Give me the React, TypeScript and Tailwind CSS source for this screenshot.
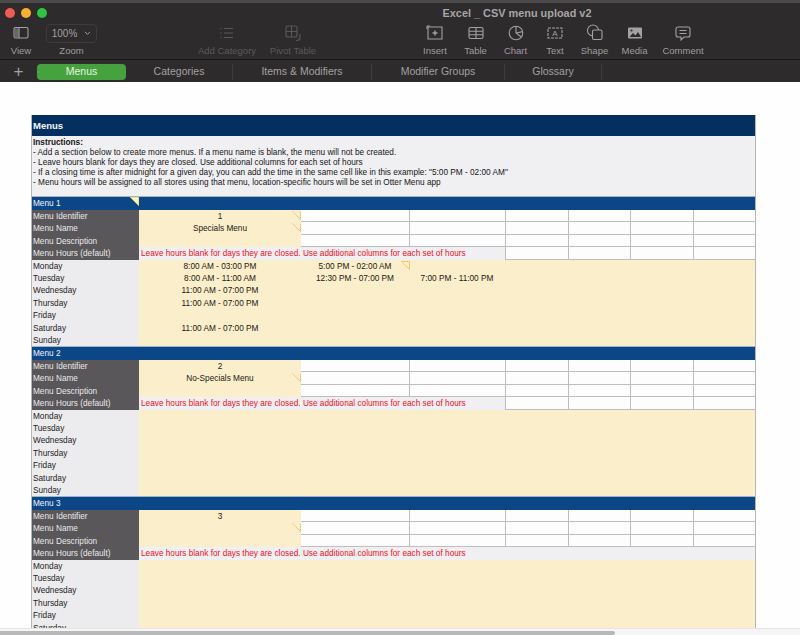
import React from 'react';

const font = { fontFamily: '"Liberation Sans", Arial, sans-serif' };

const days = ['Monday', 'Tuesday', 'Wednesday', 'Thursday', 'Friday', 'Saturday', 'Sunday'];
const redNote = 'Leave hours blank for days they are closed. Use additional columns for each set of hours';

const iconCls = 'w-[20px] h-[20px]';

const ToolIcon = ({ name, dim }: { name: string; dim?: boolean }) => {
  const c = dim ? '#5a5859' : '#a3a1a2';
  const p = { fill: 'none', stroke: c, strokeWidth: 1.1 };
  switch (name) {
    case 'view':
      return (
        <svg viewBox="0 0 20 20" className={iconCls}>
          <rect x="3" y="4.5" width="14" height="10.5" rx="1.5" {...p} />
          <rect x="4" y="5.5" width="3.5" height="8.5" fill={c} opacity="0.5" />
          <path d="M8 5v10" {...p} />
        </svg>
      );
    case 'list':
      return (
        <svg viewBox="0 0 20 20" className={iconCls}>
          <path d="M7 5.5h9M7 10h9M7 14.5h9" {...p} />
          <path d="M3.5 5.5h1M3.5 10h1M3.5 14.5h1" {...p} strokeWidth={1.6} />
        </svg>
      );
    case 'pivot':
      return (
        <svg viewBox="0 0 20 20" className={iconCls}>
          <rect x="3" y="3" width="11" height="11" rx="2" {...p} />
          <path d="M3 8.5h11M8.5 3v11" {...p} />
          <path d="M17 11v3.5a3 3 0 0 1-3 3h-1" {...p} />
        </svg>
      );
    case 'insert':
      return (
        <svg viewBox="0 0 20 20" className={iconCls}>
          <path d="M3 4h14v12H3z" {...p} />
          <path d="M10 7.5v5M7.5 10h5" {...p} strokeWidth={1.4} />
          <path d="M2 3h3M2 3v3" {...p} />
        </svg>
      );
    case 'table':
      return (
        <svg viewBox="0 0 20 20" className={iconCls}>
          <rect x="3" y="4.5" width="14" height="11" rx="1.5" {...p} />
          <path d="M3 8.2h14M3 11.8h14M10 4.5v11" {...p} />
        </svg>
      );
    case 'chart':
      return (
        <svg viewBox="0 0 20 20" className={iconCls}>
          <circle cx="10" cy="10" r="6.8" {...p} />
          <path d="M10 3.2V10l5 3.8M10 10l6.6-1.4" {...p} />
        </svg>
      );
    case 'text':
      return (
        <svg viewBox="0 0 20 20" className={iconCls}>
          <path d="M3 5h14v10H3z" {...p} strokeDasharray="3 1" />
          <text x="10" y="13" textAnchor="middle" fontSize="8" fill={c} style={font}>A</text>
        </svg>
      );
    case 'shape':
      return (
        <svg viewBox="0 0 20 20" className={iconCls}>
          <circle cx="8" cy="7.5" r="5.5" {...p} />
          <rect x="7.5" y="7" width="9.5" height="9.5" rx="1.5" fill="#2d2b2c" stroke={c} strokeWidth={1.1} />
        </svg>
      );
    case 'media':
      return (
        <svg viewBox="0 0 20 20" className={iconCls}>
          <rect x="3" y="4.5" width="14" height="11" rx="1" fill={c} />
          <path d="M4.5 14l3.5-4 2.5 2.5 2.5-3.5 3 5z" fill="#2d2b2c" />
          <circle cx="6.5" cy="7.5" r="1.1" fill="#2d2b2c" />
        </svg>
      );
    default:
      return (
        <svg viewBox="0 0 20 20" className={iconCls}>
          <path d="M5 4h10a2 2 0 0 1 2 2v6a2 2 0 0 1-2 2h-4l-3 3v-3H5a2 2 0 0 1-2-2V6a2 2 0 0 1 2-2z" {...p} />
          <path d="M6.5 7.5h7M6.5 10.5h7" {...p} />
        </svg>
      );
  }
};

const Tool = ({ name, label, w, dim }: { name: string; label: string; w: string; dim?: boolean }) => (
  <div className={`${w} flex flex-col items-center shrink-0`}>
    <div className="h-[20px] flex items-center justify-center">
      <ToolIcon name={name} dim={dim} />
    </div>
    <span className={`mt-[2px] text-[9.5px] leading-[12px] whitespace-nowrap ${dim ? 'text-[#5c5a5b]' : 'text-[#a09e9f]'}`}>
      {label}
    </span>
  </div>
);

const Tab = ({ label, w, divider }: { label: string; w: string; divider?: boolean }) => (
  <div className={`${w} h-[16px] flex items-center justify-center text-[10.5px] text-[#a3a1a2] shrink-0 ${divider ? 'border-r border-[#3f3d3e]' : ''}`}>
    {label}
  </div>
);

// little corner marker excel leaves on commented cells
const Note = () => (
  <svg viewBox="0 0 9 9" className="absolute top-[1px] right-0 w-[9px] h-[9px]">
    <path d="M0.5 0.5L8.5 8.5V0.5" fill="none" stroke="#e0b44a" strokeWidth="1" strokeDasharray="1 0.6" />
  </svg>
);

// 11 rows share 136px in the sheet, so some are 13px and some 12px
const Row = ({ tall, children }: { tall?: boolean; children: React.ReactNode }) => (
  <div className={`grid grid-cols-[107px_162px_108px_96px_63px_62px_63px_62px] text-[8.25px] leading-[13px] ${tall ? 'grid-rows-[13px] h-[13px]' : 'grid-rows-[12px] h-[12px]'}`}>
    {children}
  </div>
);

const Blanks = ({ from = 0 }: { from?: number }) => (
  <>
    {[0, 1, 2, 3, 4, 5].slice(from).map((i) => (
      <div key={i} className={`bg-[#fdfdfe] border-b border-[#bdbcbe] ${i > 0 ? 'border-l' : ''}`} />
    ))}
  </>
);

const dayTall = [false, false, true, false, true, false, false];

interface MenuProps {
  title: string;
  id: string;
  name: string;
  idNote?: boolean;
  headNote?: boolean;
  nameNote?: boolean;
  fullGrey?: boolean;
  hours?: Record<string, string[]>;
}

const Menu = ({ title, id, name, idNote, headNote, nameNote, fullGrey, hours = {} }: MenuProps) => (
  <div>
    <div className="relative h-[14px] bg-[#0b4787] border-t border-[#9fb3c9] text-[#f2f4f7] text-[8.25px] leading-[13px] pl-[1px]">
      {title}
      {headNote && (
        <svg viewBox="0 0 9 9" className="absolute top-0 left-[98px] w-[9px] h-[9px]">
          <path d="M0 0H9V9z" fill="#fbf3c8" stroke="#d9c53c" strokeWidth="0.8" />
        </svg>
      )}
    </div>
    <Row>
      <div className="bg-[#595759] text-[#e9e9ea] pl-[1px]">Menu Identifier</div>
      <div className="relative bg-[#fbeeca] text-center text-[#1c1a12]">
        {id}
        {idNote && <Note />}
      </div>
      <Blanks />
    </Row>
    <Row tall>
      <div className="bg-[#595759] text-[#e9e9ea] pl-[1px]">Menu Name</div>
      <div className="relative bg-[#fbeeca] text-center text-[#1c1a12]">
        {name}
        {nameNote && <Note />}
      </div>
      <Blanks />
    </Row>
    <Row>
      <div className="bg-[#595759] text-[#e9e9ea] pl-[1px]">Menu Description</div>
      <div className="bg-[#fbeeca]" />
      <Blanks />
    </Row>
    <Row tall>
      <div className="bg-[#595759] text-[#e9e9ea] pl-[1px]">Menu Hours (default)</div>
      <div className={`${fullGrey ? 'col-span-7' : 'col-span-3'} bg-[#f0eff1] text-[#f0101c] pl-[2px] whitespace-nowrap`}>
        {redNote}
      </div>
      {!fullGrey && <Blanks from={2} />}
    </Row>
    {days.map((d, i) => {
      const h = hours[d] || [];
      return (
        <Row key={d} tall={dayTall[i]}>
          <div className="bg-[#ecebed] text-[#1e1e1e] pl-[1px]">{d}</div>
          <div className="bg-[#fbeeca] text-center text-[#1c1a12]">{h[0]}</div>
          <div className="relative bg-[#fbeeca] text-center text-[#1c1a12]">
            {h[1]}
            {d === 'Monday' && h[1] && (
              <svg viewBox="0 0 9 9" className="absolute top-[1px] right-[-1px] w-[9px] h-[9px]">
                <path d="M0.5 0.5L8.5 8.5V0.5z" fill="none" stroke="#eeb32f" strokeWidth="1" strokeDasharray="1 0.6" />
              </svg>
            )}
          </div>
          <div className="bg-[#fbeeca] text-center text-[#1c1a12] whitespace-nowrap">{h[2]}</div>
          <div className="col-span-4 bg-[#fbeeca]" />
        </Row>
      );
    })}
  </div>
);

const App = () => {
  return (
    <div className="w-[800px] h-[635px] overflow-hidden flex flex-col bg-[#fefefe]" style={font}>
      {/* toolbar */}
      <div className="h-[82px] shrink-0 bg-[#2d2b2c]">
        <div className="h-[60px] border-t-[3px] border-b border-t-[#4b4a4b] border-b-[#171617]">
          <div className="h-[20px] flex items-center">
            <div className="flex gap-[6px] pl-[5px]">
              <span className="w-[10px] h-[10px] rounded-full bg-[#f25a54]" />
              <span className="w-[10px] h-[10px] rounded-full bg-[#f9b12e]" />
              <span className="w-[10px] h-[10px] rounded-full bg-[#2ec63f]" />
            </div>
            <div className="ml-[395px] w-[150px] text-center font-bold text-[10.9px] text-[#a7a5a6] whitespace-nowrap">
              Excel _ CSV menu upload v2
            </div>
          </div>
          <div className="flex">
            <Tool name="view" label="View" w="w-[32px] ml-[5px]" />
            <div className="ml-[9px] w-[51px] shrink-0 flex flex-col items-center">
              <div className="w-[51px] h-[19px] mt-[1px] rounded-[4px] border border-[#3d3b3c] flex items-center justify-center gap-[7px] text-[10px] text-[#a3a1a2]">
                100%
                <svg viewBox="0 0 8 6" className="w-[7px] h-[5px]">
                  <path d="M1 1l3 3 3-3" fill="none" stroke="#a3a1a2" strokeWidth="1.2" />
                </svg>
              </div>
              <span className="mt-[2px] text-[9.5px] leading-[12px] text-[#a09e9f]">Zoom</span>
            </div>
            <Tool name="list" label="Add Category" w="ml-[100px] w-[60px]" dim />
            <Tool name="pivot" label="Pivot Table" w="ml-[12px] w-[48px]" dim />
            <Tool name="insert" label="Insert" w="ml-[98px] w-[40px]" />
            <Tool name="table" label="Table" w="w-[41px]" />
            <Tool name="chart" label="Chart" w="w-[39px]" />
            <Tool name="text" label="Text" w="w-[40px]" />
            <Tool name="shape" label="Shape" w="w-[39px]" />
            <Tool name="media" label="Media" w="w-[41px]" />
            <Tool name="comment" label="Comment" w="w-[56px]" />
          </div>
        </div>
        <div className="h-[22px] flex items-center pt-[1px]">
          <div className="w-[37px] text-center text-[17px] leading-[16px] font-light text-[#a3a1a2] shrink-0">+</div>
          <div className="w-[89px] h-[16px] rounded-[4px] bg-[#46a23c] flex items-center justify-center text-[10.5px] text-[#e6f2e3] shrink-0">
            Menus
          </div>
          <Tab label="Categories" w="w-[107px]" divider />
          <Tab label="Items & Modifiers" w="w-[139px]" divider />
          <Tab label="Modifier Groups" w="w-[133px]" divider />
          <Tab label="Glossary" w="w-[97px]" divider />
        </div>
      </div>

      {/* sheet */}
      <div className="flex-1 min-h-0 overflow-hidden pt-[33px] pl-[31px]">
        <div className="w-[725px] border-l border-r border-[#b5b4b6]">
          <div className="h-[21px] bg-[#04305f] text-[#f4f6f8] font-bold text-[9.5px] leading-[21px] pl-[1px]">Menus</div>
          <div className="h-[60px] bg-[#f0eff1] pl-[1px] pt-[2px] text-[8.25px] leading-[10px] text-[#161616]">
            <div className="font-bold">Instructions:</div>
            <div>- Add a section below to create more menus. If a menu name is blank, the menu will not be created.</div>
            <div>- Leave hours blank for days they are closed. Use additional columns for each set of hours</div>
            <div>- If a closing time is after midnight for a given day, you can add the time in the same cell like in this example: "5:00 PM - 02:00 AM"</div>
            <div>- Menu hours will be assigned to all stores using that menu, location-specific hours will be set in Otter Menu app</div>
          </div>
          <Menu
            title="Menu 1"
            id="1"
            name="Specials Menu"
            idNote
            headNote
            nameNote
            hours={{
              Monday: ['8:00 AM - 03:00 PM', '5:00 PM - 02:00 AM'],
              Tuesday: ['8:00 AM - 11:00 AM', '12:30 PM - 07:00 PM', '7:00 PM - 11:00 PM'],
              Wednesday: ['11:00 AM - 07:00 PM'],
              Thursday: ['11:00 AM - 07:00 PM'],
              Saturday: ['11:00 AM - 07:00 PM'],
            }}
          />
          <Menu title="Menu 2" id="2" name="No-Specials Menu" nameNote />
          <Menu title="Menu 3" id="3" name="" nameNote fullGrey />
        </div>
      </div>

      {/* horizontal scrollbar */}
      <div className="h-[7px] shrink-0 bg-[#f6f6f6] border-t border-[#e6e6e6] pt-[2px]">
        <div className="w-[615px] h-[4px] rounded-r-[3px] bg-[#b9b8b9]" />
      </div>
    </div>
  );
};

export default App;
